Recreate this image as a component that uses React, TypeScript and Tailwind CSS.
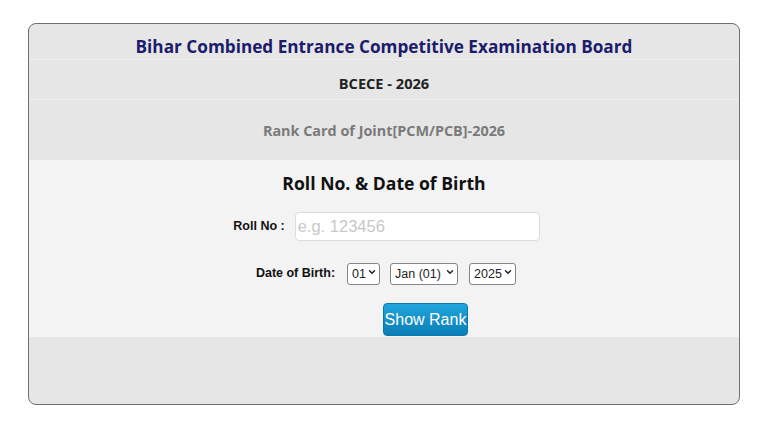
import { ChevronDown } from "lucide-react";

const Dropdown = ({ value, options, width }: { value: string; options: string[]; width: string }) => {
  return (
    <div className={`relative ${width}`}>
      <select
        defaultValue={value}
        className="appearance-none w-full h-[22px] border border-[#858585] rounded-[3px] bg-white pl-[4px] pr-[10px] text-[12.5px] text-[#222] leading-[20px] font-['Liberation_Sans',Arial,sans-serif]"
      >
        {options.map((o) => (
          <option key={o}>{o}</option>
        ))}
      </select>
      <ChevronDown
        className="pointer-events-none absolute right-[3px] top-[6px] w-[10px] h-[10px] text-[#222]"
        strokeWidth={3.5}
      />
    </div>
  );
};

const App = () => {
  return (
    <div className="w-[768px] h-[432px] bg-white pt-[23px] px-[28px] font-['Open_Sans',sans-serif]">
      <div className="w-[712px] h-[382px] border border-[#6e6e6e] rounded-[8px] bg-[#e6e6e6] overflow-hidden flex flex-col">
        <div className="h-[36px] flex items-end justify-center border-b border-[#efefef]">
          <h1 className="text-[17.2px] leading-[24px] font-bold text-[#1c1c6c]">
            Bihar Combined Entrance Competitive Examination Board
          </h1>
        </div>
        <div className="h-[40px] flex items-center justify-center pt-[8px] border-b border-[#efefef]">
          <span className="text-[14.6px] font-bold text-[#222]">BCECE - 2026</span>
        </div>
        <div className="h-[60px] flex items-center justify-center pt-[1px]">
          <span className="text-[14.4px] font-bold text-[#7a7a7a]">Rank Card of Joint[PCM/PCB]-2026</span>
        </div>

        <div className="h-[177px] bg-[#f3f3f3] flex flex-col items-center">
          <h2 className="mt-[11px] text-[17.6px] leading-[24px] font-bold text-[#111]">Roll No. &amp; Date of Birth</h2>

          <div className="mt-[17px] flex items-center gap-[10px] pl-[5px] font-['Liberation_Sans',Arial,sans-serif]">
            <label className="text-[12.5px] font-bold text-[#111]">Roll No :</label>
            <input
              type="text"
              placeholder="e.g. 123456"
              className="w-[245px] h-[29px] bg-white border border-[#dcdcdc] rounded-[4px] px-[2px] text-[16.5px] placeholder:text-[#c8c8c8] outline-none"
            />
          </div>

          <div className="mt-[20px] flex items-center ml-[4px] font-['Liberation_Sans',Arial,sans-serif]">
            <label className="text-[12.5px] font-bold text-[#111] mr-[12px]">Date of Birth:</label>
            <Dropdown value="01" options={["01", "02", "03"]} width="w-[33px]" />
            <div className="w-[10px]" />
            <Dropdown value="Jan (01)" options={["Jan (01)", "Feb (02)", "Mar (03)"]} width="w-[68px]" />
            <div className="w-[11px]" />
            <Dropdown value="2025" options={["2025", "2024", "2023"]} width="w-[47px]" />
          </div>

          <div className="mt-[18px] pl-[83px]">
            <button className="w-[85px] h-[33px] rounded-[4px] bg-gradient-to-b from-[#1fa6dc] to-[#0b7db6] border border-[#0b78ae] text-white text-[16px] font-['Liberation_Sans',Arial,sans-serif]">
              Show Rank
            </button>
          </div>
        </div>

        <div className="flex-1" />
      </div>
    </div>
  );
};

export default App;
